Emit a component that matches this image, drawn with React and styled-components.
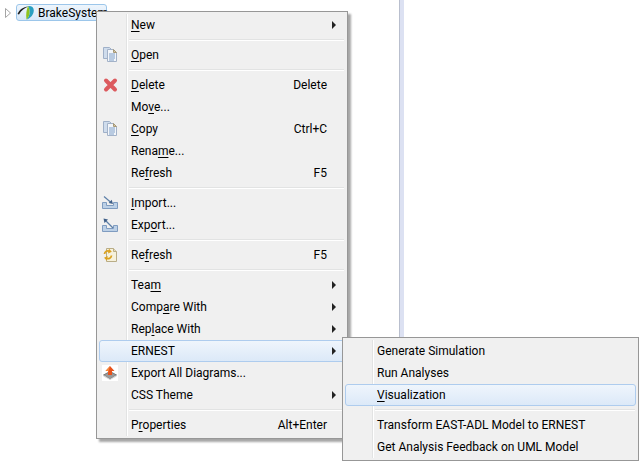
import React from "react";
import styled, { createGlobalStyle } from "styled-components";

const Global = createGlobalStyle`
  html, body { margin: 0; padding: 0; background: #fff; }
  body { font-family: Roboto, "Noto Sans", sans-serif; font-size: 12px; color: #000; }
`;

const Page = styled.div`
  position: relative;
  width: 639px;
  height: 461px;
  overflow: hidden;
  display: flex;
  background: #fff;
`;
const TreePane = styled.div`
  width: 399px;
  flex: none;
  padding: 4px 0 0 5px;
  box-sizing: border-box;
`;
const Splitter = styled.div`
  width: 4px;
  flex: none;
  background: #dce1f2;
  border-left: 1px solid #b9bfce;
`;
const TreeRow = styled.div`
  display: flex;
  align-items: center;
  height: 17px;
`;
const Twisty = styled.svg`
  width: 6px;
  height: 10px;
  margin-right: 5px;
  flex: none;
`;
const TreeItem = styled.div`
  display: flex;
  align-items: center;
  gap: 4px;
  box-sizing: border-box;
  width: 91px;
  height: 17px;
  border: 1px solid #9cc6ea;
  border-radius: 3px;
  background: linear-gradient(#eef5fc, #d6e7f8);
  white-space: nowrap;
`;
const Menu = styled.div`
  position: absolute;
  left: ${p => p.$left}px;
  top: ${p => p.$top}px;
  width: ${p => p.$width}px;
  box-sizing: border-box;
  border: 1px solid #979797;
  padding: 2px;
  background: #f0f0f0;
  box-shadow: 3px 3px 2px rgba(0, 0, 0, 0.35);
`;
const Gutter = styled.div`
  position: absolute;
  left: ${p => p.$at}px;
  top: 2px;
  bottom: 2px;
  width: 2px;
  background: linear-gradient(90deg, #e2e3e3 50%, #fff 50%);
`;
const Row = styled.div`
  position: relative;
  display: flex;
  align-items: center;
  box-sizing: border-box;
  height: 22px;
  padding-left: ${p => p.$indent}px;
  padding-right: 17px;
  padding-bottom: 1px;
  color: #000;
  white-space: nowrap;
  border: 1px solid ${p => (p.$hot ? "#aeccee" : "transparent")};
  border-radius: 3px;
  background: ${p => (p.$hot ? "linear-gradient(#eff5fc, #dce9f8)" : "transparent")};
`;
const IconSlot = styled.span`
  position: absolute;
  left: 2px;
  top: 2px;
  width: 16px;
  height: 16px;
  display: block;
`;
const Label = styled.span`
  flex: 1;
`;
const Shortcut = styled.span`
  margin-left: 20px;
`;
const Arrow = styled.span`
  position: absolute;
  right: 8px;
  top: 6px;
  width: 0;
  height: 0;
  border-left: 4px solid #222;
  border-top: 4px solid transparent;
  border-bottom: 4px solid transparent;
`;
const Separator = styled.div`
  height: 2px;
  margin: 3px 1px 3px ${p => p.$indent}px;
  background: linear-gradient(#e2e3e3 50%, #fff 50%);
`;

const PagesIcon = () => (
  <svg width="16" height="16" viewBox="0 0 16 16">
    <path d="M1.500 0.500h6l2 2v9h-8z" fill="#cfdcec" stroke="#9fb0c8" />
    <path d="M5.500 2.500h6l3 3v9h-9z" fill="#f3f6fa" stroke="#a3b2c8" />
    <path d="M11.500 2.500l3 3h-3z" fill="#d8c9a6" stroke="#a89a78" />
    <path d="M7 7h6M7 9h6M7 11h6M7 13h5" stroke="#7f9fc8" />
  </svg>
);
const DeleteIcon = () => (
  <svg width="16" height="16" viewBox="0 0 16 16">
    <path d="M4 3.500L13 12.500M13 3.500L4 12.500" stroke="#dc5a5e" strokeWidth="4" strokeLinecap="round" />
  </svg>
);
const ImportIcon = () => (
  <svg width="16" height="16" viewBox="0 0 16 16">
    <path d="M0.500 7.500h4v3h7v-3h4v6h-15z" fill="#bcd0e6" stroke="#7f9cc0" />
    <path d="M2 1.500l7 6" stroke="#5d7fa8" strokeWidth="1.200" />
    <path d="M11 9l-1.300-4.300-3 3.300z" fill="#3f5f88" />
  </svg>
);
const ExportIcon = () => (
  <svg width="16" height="16" viewBox="0 0 16 16">
    <path d="M0.500 8.500h4v3h7v-3h4v6h-15z" fill="#bcd0e6" stroke="#7f9cc0" />
    <path d="M4 4l7 7" stroke="#5d7fa8" strokeWidth="1.200" />
    <path d="M1.500 1.500l4.500 1-3.500 3.500z" fill="#3f5f88" />
  </svg>
);
const RefreshIcon = () => (
  <svg width="16" height="16" viewBox="0 0 16 16">
    <path d="M4.500 1.500h7l3 3v10h-10z" fill="#f6f1dc" stroke="#b9ad87" />
    <path d="M11.500 1.500v3h3" fill="#e6dcb8" stroke="#b9ad87" />
    <path d="M2.500 7a3.500 3.500 0 0 1 5-2.800M9.500 8.500a3.500 3.500 0 0 1-5 2.800" fill="none" stroke="#dba21f" strokeWidth="1.800" />
    <path d="M7 1.800l2.800 3-3.800 1.700zM5 13.800l-3-3 3.700-1.700z" fill="#dba21f" />
  </svg>
);
const DiagramIcon = () => (
  <svg width="16" height="16" viewBox="0 0 16 16">
    <rect width="16" height="16" fill="#fff" />
    <path d="M1.500 10l6.500-3.500 6.500 3.500-6.500 4z" fill="#9a9a9a" stroke="#777" />
    <path d="M1.500 10v1.500l6.500 3.500 6.500-3.500v-1.500l-6.500 4z" fill="#d4d4d4" />
    <path d="M8 1l4.500 5h-2.500v4h-4v-4h-2.500z" fill="#e8531c" />
    <path d="M8 1l-4.500 5h2.500v2z" fill="#f58a3c" />
  </svg>
);
const LogoIcon = () => (
  <svg width="17" height="15" viewBox="0 0 17 15" style={{ flex: "none" }}>
    <path d="M0.500 9C2.500 4.500 6 2 11.500 1.500 7.500 3 4.500 5 2 9.500z" fill="#1e1e1e" />
    <path d="M11 1c3.300-.4 5.800 1 5.800 4.200 0 4-2.900 8-7.300 9.300 2.300-2.500 3.200-4.800 3-7.800C12.500 4.300 12 2.700 11 1z" fill="#2a9fc0" />
    <path d="M11 1c1 1.700 1.500 3.300 1.500 5.700.2 3-.7 5.300-3 7.800C8.700 9 9.500 5 11 1z" fill="#8fc31f" />
  </svg>
);

const Mn = styled.u`
  text-underline-offset: 2px;
`;

const mainIndent = 31;
const subIndent = 31;

const MainMenu = [
  { l: <><Mn>N</Mn>ew</>, a: 1 },
  "sep",
  { l: <><Mn>O</Mn>pen</>, i: <PagesIcon /> },
  "sep",
  { l: <><Mn>D</Mn>elete</>, s: "Delete", i: <DeleteIcon /> },
  { l: <>Mo<Mn>v</Mn>e...</> },
  { l: <><Mn>C</Mn>opy</>, s: "Ctrl+C", i: <PagesIcon /> },
  { l: <>Rena<Mn>m</Mn>e...</> },
  { l: <>Re<Mn>f</Mn>resh</>, s: "F5" },
  "sep",
  { l: <><Mn>I</Mn>mport...</>, i: <ImportIcon /> },
  { l: <>Exp<Mn>o</Mn>rt...</>, i: <ExportIcon /> },
  "sep",
  { l: <>Re<Mn>f</Mn>resh</>, s: "F5", i: <RefreshIcon /> },
  "sep",
  { l: <>Tea<Mn>m</Mn></>, a: 1 },
  { l: <>Comp<Mn>a</Mn>re With</>, a: 1 },
  { l: <>Rep<Mn>l</Mn>ace With</>, a: 1 },
  { l: "ERNEST", a: 1, h: 1 },
  { l: "Export All Diagrams...", i: <DiagramIcon /> },
  { l: "CSS Theme", a: 1 },
  "sep",
  { l: <>P<Mn>r</Mn>operties</>, s: "Alt+Enter" },
];

const SubMenu = [
  { l: "Generate Simulation" },
  { l: "Run Analyses" },
  { l: <><Mn>V</Mn>isualization</>, h: 1 },
  "sep",
  { l: "Transform EAST-ADL Model to ERNEST" },
  { l: "Get Analysis Feedback on UML Model" },
];

const Items = ({ items, indent }) =>
  items.map((it, n) =>
    it === "sep" ? (
      <Separator key={n} $indent={indent - 1} />
    ) : (
      <Row key={n} $hot={it.h} $indent={indent}>
        {it.i && <IconSlot>{it.i}</IconSlot>}
        <Label>{it.l}</Label>
        {it.s && <Shortcut>{it.s}</Shortcut>}
        {it.a && <Arrow />}
      </Row>
    )
  );

export default function App() {
  return (
    <Page>
      <Global />
      <TreePane>
        <TreeRow>
          <Twisty viewBox="0 0 6 10">
            <path d="M0.500 0.500L5.500 5 0.500 9.500z" fill="#fff" stroke="#a5a5a5" />
          </Twisty>
          <TreeItem>
            <LogoIcon />
            <span>BrakeSystem</span>
          </TreeItem>
        </TreeRow>
      </TreePane>
      <Splitter />
      <Menu $left={96} $top={11} $width={252}>
        <Gutter $at={29} />
        <Items items={MainMenu} indent={mainIndent} />
      </Menu>
      <Menu $left={342} $top={337} $width={297}>
        <Gutter $at={29} />
        <Items items={SubMenu} indent={subIndent} />
      </Menu>
    </Page>
  );
}
